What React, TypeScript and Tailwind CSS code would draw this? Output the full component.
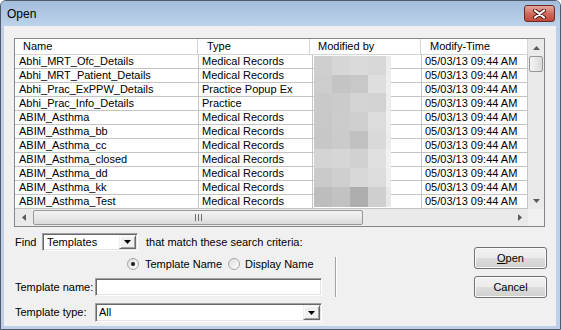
import React from 'react';

// --- Data ---
const templates: [string, string][] = [
  ['Abhi_MRT_Ofc_Details', 'Medical Records'],
  ['Abhi_MRT_Patient_Details', 'Medical Records'],
  ['Abhi_Prac_ExPPW_Details', 'Practice Popup Ex'],
  ['Abhi_Prac_Info_Details', 'Practice'],
  ['ABIM_Asthma', 'Medical Records'],
  ['ABIM_Asthma_bb', 'Medical Records'],
  ['ABIM_Asthma_cc', 'Medical Records'],
  ['ABIM_Asthma_closed', 'Medical Records'],
  ['ABIM_Asthma_dd', 'Medical Records'],
  ['ABIM_Asthma_kk', 'Medical Records'],
  ['ABIM_Asthma_Test', 'Medical Records'],
];

// pixelated redaction over the "Modified by" column
const redactHeights = [19, 18, 19, 19, 18, 19, 19, 20];
const redactWidths = [18, 18, 18, 18, 5];
const redactShades = [
  ['#cfcfcf', '#d6d6d6', '#dadada', '#d8d8d8', '#ececec'],
  ['#cdcdcd', '#c4c4c4', '#c8c8c8', '#dedede', '#efefef'],
  ['#c9c9c9', '#cbcbcb', '#d4d4d4', '#d2d2d2', '#eeeeee'],
  ['#c8c8c8', '#cccccc', '#cfcfcf', '#dcdcdc', '#f0f0f0'],
  ['#c7c7c7', '#cbcbcb', '#c1c1c1', '#d9d9d9', '#ededed'],
  ['#d4d4d4', '#d6d6d6', '#d1d1d1', '#e0e0e0', '#f2f2f2'],
  ['#cacaca', '#cfcfcf', '#d8d8d8', '#dcdcdc', '#efefef'],
  ['#bdbdbd', '#c2c2c2', '#aeaeae', '#cfcfcf', '#e8e8e8'],
];

// --- Small pieces ---
const Tri = ({ dir }: { dir: 'up' | 'down' | 'left' | 'right' }) => {
  const pts = {
    up: '0,4 7,4 3.5,0',
    down: '0,0 7,0 3.5,4',
    left: '4,0 4,7 0,3.5',
    right: '0,0 0,7 4,3.5',
  }[dir];
  const vertical = dir === 'up' || dir === 'down';
  return (
    <svg width={vertical ? 7 : 4} height={vertical ? 4 : 7} viewBox={vertical ? '0 0 7 4' : '0 0 4 7'}>
      <polygon points={pts} fill="#5a5a5a" />
    </svg>
  );
};

const DropButton = () => (
  <div className="w-[17px] h-full flex items-center justify-center bg-[#f0f0f0] border border-[#f0f0f0] border-r-[#696969] border-b-[#696969] shadow-[inset_1px_1px_0_#ffffff,inset_-1px_-1px_0_#a0a0a0]">
    <svg width="7" height="4" viewBox="0 0 7 4">
      <polygon points="0,0 7,0 3.5,4" fill="#000" />
    </svg>
  </div>
);

const sunken =
  'border border-t-[#a0a0a0] border-l-[#a0a0a0] border-b-white border-r-white shadow-[inset_1px_1px_0_#696969,inset_-1px_-1px_0_#e3e3e3] bg-white';

const Radio = ({ checked }: { checked?: boolean }) => (
  <div className="w-[12px] h-[12px] rounded-full border border-[#a4a4a4] bg-gradient-to-br from-[#dcdcdc] to-white flex items-center justify-center">
    {checked && <div className="w-[4px] h-[4px] rounded-full bg-[#1a1a1a]" />}
  </div>
);

const WinButton = ({ children }: { children: React.ReactNode }) => (
  <button className="w-[73px] h-[22px] rounded-[3px] border border-[#707070] bg-[linear-gradient(#f2f2f2_0%,#ebebeb_48%,#dddddd_52%,#cfcfcf_100%)] shadow-[inset_0_0_0_1px_#fbfbfb] text-[11px] text-black flex items-center justify-center">
    {children}
  </button>
);

const thumb =
  'border border-[#979797] rounded-[2px] bg-[linear-gradient(90deg,#f3f3f3,#e8e8e8_50%,#d9d9d9)]';

export default function App() {
  return (
    <div className="w-[561px] h-[330px] flex flex-col bg-[#bcd1e9] border border-[#4d5b6c] rounded-t-[6px] overflow-hidden font-['Liberation_Sans',Arial,sans-serif] text-[11px] text-black leading-none">
      {/* Title bar */}
      <div className="h-[25px] shrink-0 flex items-center justify-between pl-[6px] pr-[5px] bg-gradient-to-b from-[#a3bddb] to-[#bdd2ea]">
        <span className="text-[12px] text-black">Open</span>
        <div className="w-[31px] h-[17px] rounded-[3px] border border-[#6b2a22] bg-gradient-to-b from-[#e4a99f] via-[#cf6b5d] to-[#c0483a] flex items-center justify-center">
          <svg width="13" height="10" viewBox="0 0 13 10">
            <path d="M2 1.5 L11 8.5 M11 1.5 L2 8.5" stroke="#4a1a14" strokeWidth="4" strokeLinecap="round" />
            <path d="M2 1.5 L11 8.5 M11 1.5 L2 8.5" stroke="#ffffff" strokeWidth="2.2" strokeLinecap="round" />
          </svg>
        </div>
      </div>

      {/* Client area */}
      <div className="flex-1 ml-[3px] mr-[4px] mb-[3px] bg-[#f0f0f0] flex flex-col">
        {/* List box */}
        <div className="ml-[10px] mt-[12px] w-[531px] h-[189px] border border-[#828790] bg-white flex flex-col">
          <div className="flex h-[170px]">
            <div className="relative w-[513px] flex flex-col">
              {/* Header */}
              <div className="flex h-[16px] border-b border-[#d5d5d5] bg-white">
                <div className="w-[183px] pl-[8px] flex items-center border-r border-[#d5d5d5]">Name</div>
                <div className="w-[112px] pl-[9px] flex items-center border-r border-[#d5d5d5]">Type</div>
                <div className="w-[111px] pl-[8px] flex items-center border-r border-[#d5d5d5]">Modified by</div>
                <div className="w-[107px] pl-[9px] flex items-center border-r border-[#d5d5d5]">Modify-Time</div>
              </div>
              {/* Rows */}
              {templates.map(([name, type]) => (
                <div key={name} className="flex h-[14px]">
                  <div className="w-[184px] pl-[4px] flex items-center border-r border-b border-[#c4c4c4] whitespace-nowrap overflow-hidden">{name}</div>
                  <div className="w-[114px] pl-[3px] flex items-center border-r border-b border-[#c4c4c4] whitespace-nowrap overflow-hidden">{type}</div>
                  <div className="w-[109px] border-r border-b border-[#c4c4c4]" />
                  <div className="w-[106px] pl-[3px] flex items-center border-r border-b border-[#c4c4c4] whitespace-nowrap overflow-hidden">05/03/13 09:44 AM</div>
                </div>
              ))}
              {/* redaction blocks */}
              <div className="absolute left-[299px] top-[17px] flex flex-col">
                {redactHeights.map((h, r) => (
                  <div key={r} className="flex">
                    {redactWidths.map((w, c) => (
                      <div key={c} style={{ width: w, height: h, backgroundColor: redactShades[r][c] }} />
                    ))}
                  </div>
                ))}
              </div>
            </div>
            {/* Vertical scrollbar */}
            <div className="w-[16px] bg-[#eaeaea] flex flex-col">
              <div className="h-[17px] flex items-center justify-center">
                <Tri dir="up" />
              </div>
              <div className={`mx-[1px] h-[16px] ${thumb}`} />
              <div className="flex-1" />
              <div className="h-[17px] flex items-center justify-center">
                <Tri dir="down" />
              </div>
            </div>
          </div>
          {/* Horizontal scrollbar */}
          <div className="flex h-[17px]">
            <div className="w-[513px] bg-[#eaeaea] flex items-center">
              <div className="w-[17px] h-full flex items-center justify-center">
                <Tri dir="left" />
              </div>
              <div className={`w-[330px] h-[15px] ml-[1px] flex items-center justify-center gap-[2px] bg-[linear-gradient(#f3f3f3,#e8e8e8_50%,#d9d9d9)] border border-[#979797] rounded-[2px]`}>
                <div className="w-px h-[7px] bg-[#6e6e6e]" />
                <div className="w-px h-[7px] bg-[#6e6e6e]" />
                <div className="w-px h-[7px] bg-[#6e6e6e]" />
              </div>
              <div className="flex-1" />
              <div className="w-[17px] h-full flex items-center justify-center">
                <Tri dir="right" />
              </div>
            </div>
            <div className="w-[16px] bg-[#f0f0f0]" />
          </div>
        </div>

        {/* Search criteria + buttons */}
        <div className="flex mt-[6px]">
          <div className="w-[318px] pl-[11px] flex flex-col">
            <div className="flex items-center h-[18px]">
              <span className="w-[27px]">Find</span>
              <div className={`w-[96px] h-[18px] flex items-center ${sunken}`}>
                <span className="flex-1 pl-[4px]">Templates</span>
                <div className="h-[14px] mr-[1px]">
                  <DropButton />
                </div>
              </div>
              <span className="ml-[8px] whitespace-nowrap">that match these search criteria:</span>
            </div>
            <div className="flex items-center h-[14px] mt-[6px] pl-[112px]">
              <Radio checked />
              <span className="ml-[6px] whitespace-nowrap">Template Name</span>
              <div className="ml-[6px]">
                <Radio />
              </div>
              <span className="ml-[5px] whitespace-nowrap">Display Name</span>
            </div>
            <div className="flex items-center h-[18px] mt-[7px]">
              <span className="w-[80px] whitespace-nowrap">Template name:</span>
              <div className={`flex-1 h-[18px] ${sunken}`} />
            </div>
            <div className="flex items-center h-[19px] mt-[7px]">
              <span className="w-[80px] whitespace-nowrap">Template type:</span>
              <div className={`flex-1 h-[19px] flex items-center ${sunken}`}>
                <span className="flex-1 pl-[3px]">All</span>
                <div className="h-[15px] mr-[1px]">
                  <DropButton />
                </div>
              </div>
            </div>
          </div>

          <div className="ml-[13px] mt-[24px] w-px h-[40px] bg-[#a0a0a0] shadow-[1px_0_0_#ffffff]" />

          <div className="ml-[138px] mt-[14px] flex flex-col gap-[7px]">
            <WinButton>
              <span className="underline">O</span>pen
            </WinButton>
            <WinButton>Cancel</WinButton>
          </div>
        </div>
      </div>
    </div>
  );
}
